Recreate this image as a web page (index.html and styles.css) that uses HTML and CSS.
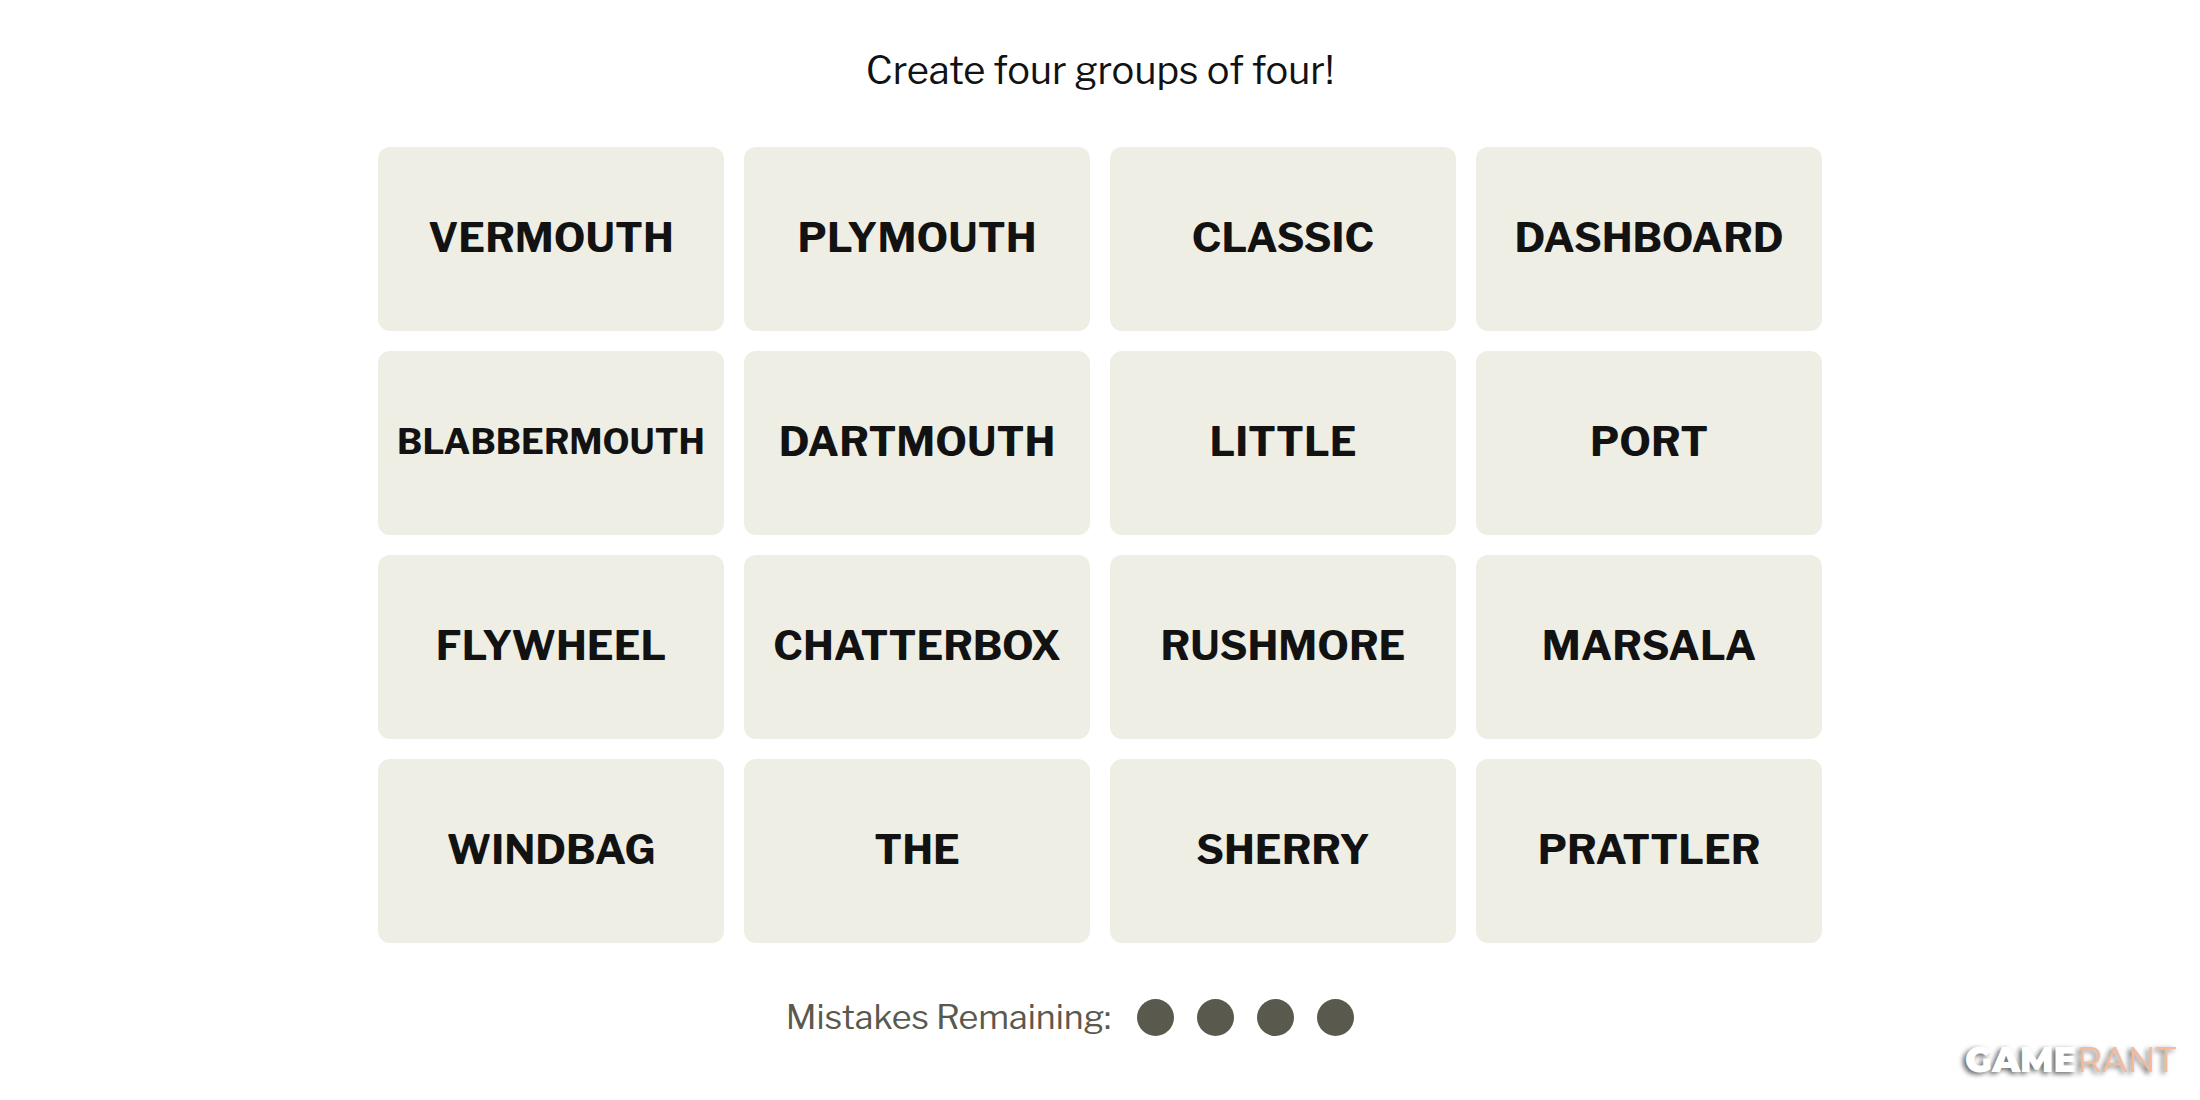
FILE: index.html
```
<!DOCTYPE html>
<html lang="en">
<head>
  <meta charset="UTF-8" />
  <meta name="viewport" content="width=device-width, initial-scale=1.0" />
  <title>Connections</title>
  <link rel="stylesheet" href="styles.css">
</head>
<body>
  <main class="game">
    <h1 class="prompt">Create four groups of four!</h1>
    <div class="board">
      <button class="card">VERMOUTH</button>
      <button class="card">PLYMOUTH</button>
      <button class="card">CLASSIC</button>
      <button class="card">DASHBOARD</button>
      <button class="card long">BLABBERMOUTH</button>
      <button class="card">DARTMOUTH</button>
      <button class="card">LITTLE</button>
      <button class="card">PORT</button>
      <button class="card">FLYWHEEL</button>
      <button class="card">CHATTERBOX</button>
      <button class="card">RUSHMORE</button>
      <button class="card">MARSALA</button>
      <button class="card">WINDBAG</button>
      <button class="card">THE</button>
      <button class="card">SHERRY</button>
      <button class="card">PRATTLER</button>
    </div>
    <div class="mistakes">
      <span>Mistakes Remaining:</span>
      <div class="dots">
        <span class="dot"></span>
        <span class="dot"></span>
        <span class="dot"></span>
        <span class="dot"></span>
      </div>
    </div>
  </main>
  <div class="watermark">GAME<span class="rant">RANT</span></div>
</body>
</html>
```

FILE: styles.css
```
* {
  box-sizing: border-box;
}
body {
  margin: 0;
  background: #fff;
  color: #121212;
  font-family: "Libre Franklin", "Liberation Sans", sans-serif;
}
.game {
  width: 66%;
  margin: 0 auto;
  padding: 46px 4px 0;
  text-align: center;
}
.prompt {
  margin: 0 0 53px;
  font-size: 38px;
  line-height: 48px;
  font-weight: 400;
}
.board {
  display: grid;
  grid-template-columns: repeat(4, 1fr);
  gap: 20px;
}
.card {
  height: 184px;
  padding: 0 0 4px;
  border: none;
  border-radius: 12px;
  background: #eeeee5;
  color: #121212;
  font-family: inherit;
  font-size: 41px;
  font-weight: 700;
  cursor: pointer;
}
.long {
  font-size: 35px;
}
.mistakes {
  display: flex;
  justify-content: center;
  align-items: center;
  gap: 26px;
  margin-top: 50px;
  padding-right: 60px;
  font-size: 34px;
  line-height: 48px;
  color: #5a594e;
}
.dots {
  display: flex;
  gap: 23px;
}
.dot {
  width: 37px;
  height: 37px;
  border-radius: 50%;
  background: #5a594e;
}
.watermark {
  position: absolute;
  right: 24px;
  bottom: 16px;
  font-family: "Montserrat", Lato, sans-serif;
  font-size: 35px;
  line-height: 48px;
  font-weight: 900;
  color: #fff;
  text-shadow: -3px 2px 5px rgba(0, 0, 0, 0.6);
}
.rant {
  color: #f5b99c;
  font-weight: 400;
}
```
